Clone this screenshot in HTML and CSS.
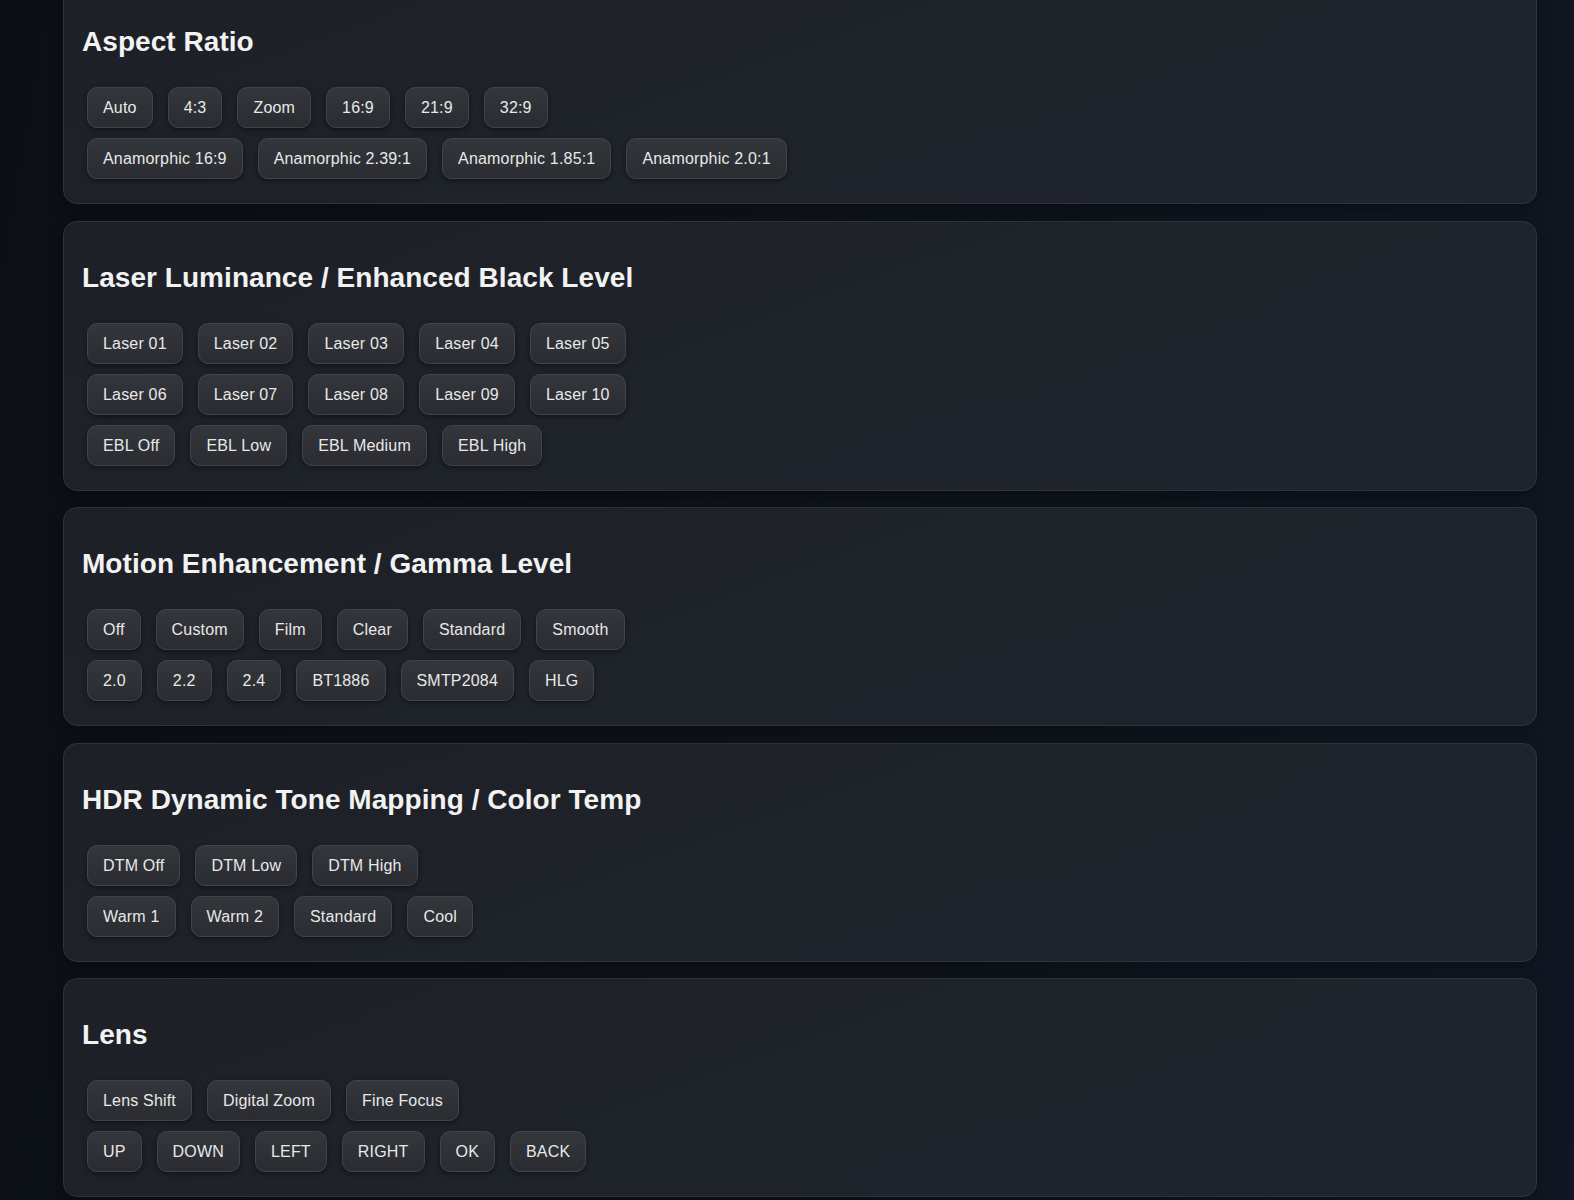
FILE: index.html
```html
<!DOCTYPE html>
<html lang="en">
<head>
    <meta charset="UTF-8">
    <meta name="viewport" content="width=device-width, initial-scale=1.0">
    <title>Projector Remote</title>
    <link rel="stylesheet" href="styles.css">
</head>
<body>

    <div class="remote">

        <!-- Aspect -->
        <div class="section">
            <h2>Aspect Ratio</h2>
            <div class="button-row">
                <button class="btn">Auto</button>
                <button class="btn">4:3</button>
                <button class="btn">Zoom</button>
                <button class="btn">16:9</button>
                <button class="btn">21:9</button>
                <button class="btn">32:9</button>
            </div>
            <div class="button-row">
                <button class="btn">Anamorphic 16:9</button>
                <button class="btn">Anamorphic 2.39:1</button>
                <button class="btn">Anamorphic 1.85:1</button>
                <button class="btn">Anamorphic 2.0:1</button>
            </div>
        </div>

        <!-- Laser / EBL -->
        <div class="section">
            <h2>Laser Luminance / Enhanced Black Level</h2>
            <div class="button-row">
                <button class="btn">Laser 01</button>
                <button class="btn">Laser 02</button>
                <button class="btn">Laser 03</button>
                <button class="btn">Laser 04</button>
                <button class="btn">Laser 05</button>
            </div>
            <div class="button-row">
                <button class="btn">Laser 06</button>
                <button class="btn">Laser 07</button>
                <button class="btn">Laser 08</button>
                <button class="btn">Laser 09</button>
                <button class="btn">Laser 10</button>
            </div>
            <div class="button-row">
                <button class="btn">EBL Off</button>
                <button class="btn">EBL Low</button>
                <button class="btn">EBL Medium</button>
                <button class="btn">EBL High</button>
            </div>
        </div>

        <!-- Motion / Gamma -->
        <div class="section">
            <h2>Motion Enhancement / Gamma Level</h2>
            <div class="button-row">
                <button class="btn">Off</button>
                <button class="btn">Custom</button>
                <button class="btn">Film</button>
                <button class="btn">Clear</button>
                <button class="btn">Standard</button>
                <button class="btn">Smooth</button>
            </div>
            <div class="button-row">
                <button class="btn">2.0</button>
                <button class="btn">2.2</button>
                <button class="btn">2.4</button>
                <button class="btn">BT1886</button>
                <button class="btn">SMTP2084</button>
                <button class="btn">HLG</button>
            </div>
        </div>

        <!-- HDR / Color Temp -->
        <div class="section">
            <h2>HDR Dynamic Tone Mapping / Color Temp</h2>
            <div class="button-row">
                <button class="btn">DTM Off</button>
                <button class="btn">DTM Low</button>
                <button class="btn">DTM High</button>
            </div>
            <div class="button-row">
                <button class="btn">Warm 1</button>
                <button class="btn">Warm 2</button>
                <button class="btn">Standard</button>
                <button class="btn">Cool</button>
            </div>
        </div>

        <!-- Lens / navigation -->
        <div class="section">
            <h2>Lens</h2>
            <div class="button-row">
                <button class="btn">Lens Shift</button>
                <button class="btn">Digital Zoom</button>
                <button class="btn">Fine Focus</button>
            </div>
            <div class="button-row">
                <button class="btn">UP</button>
                <button class="btn">DOWN</button>
                <button class="btn">LEFT</button>
                <button class="btn">RIGHT</button>
                <button class="btn">OK</button>
                <button class="btn">BACK</button>
            </div>
        </div>

    </div>

</body>
</html>
```

FILE: styles.css
```css
html {
    background: #0d1117;
}
body {
    font-family: "Liberation Sans", Arial, sans-serif;
    margin: 0;
    min-height: 100vh;
    background: linear-gradient(100deg, #0c1016 0%, #0f141c 60%, #111722 100%);
    color: #eeeeee;
    overflow: hidden;
}
.remote {
    margin-top: -15px;
    padding: 0 37px 0 63px;
}
.section {
    background: linear-gradient(160deg, #1d2026 0%, #1f232a 50%, #1f232c 100%);
    border: 1px solid #30343a;
    border-radius: 14px;
    padding: 17px 18px 19px;
    margin-bottom: 16.5px;
    box-shadow: 0 4px 14px rgba(0, 0, 0, 0.35);
}
.section h2 {
    font-size: 28px;
    font-weight: bold;
    color: #f2f2f2;
    letter-spacing: 0.05px;
    margin: 23px 0 24px;
}
.button-row {
    display: flex;
    gap: 15px;
    padding: 5px;
}
.btn {
    font-family: "Liberation Sans", Arial, sans-serif;
    font-size: 16px;
    line-height: 17px;
    letter-spacing: 0.18px;
    color: #e8e8e8;
    background: linear-gradient(180deg, #33363b 0%, #2a2c31 100%);
    border: 1px solid #414449;
    border-radius: 10px;
    padding: 11px 15px;
    box-shadow: 0 2px 5px rgba(0, 0, 0, 0.45);
    cursor: pointer;
}
.btn:hover {
    background: linear-gradient(180deg, #3b3e44 0%, #303338 100%);
}
```
